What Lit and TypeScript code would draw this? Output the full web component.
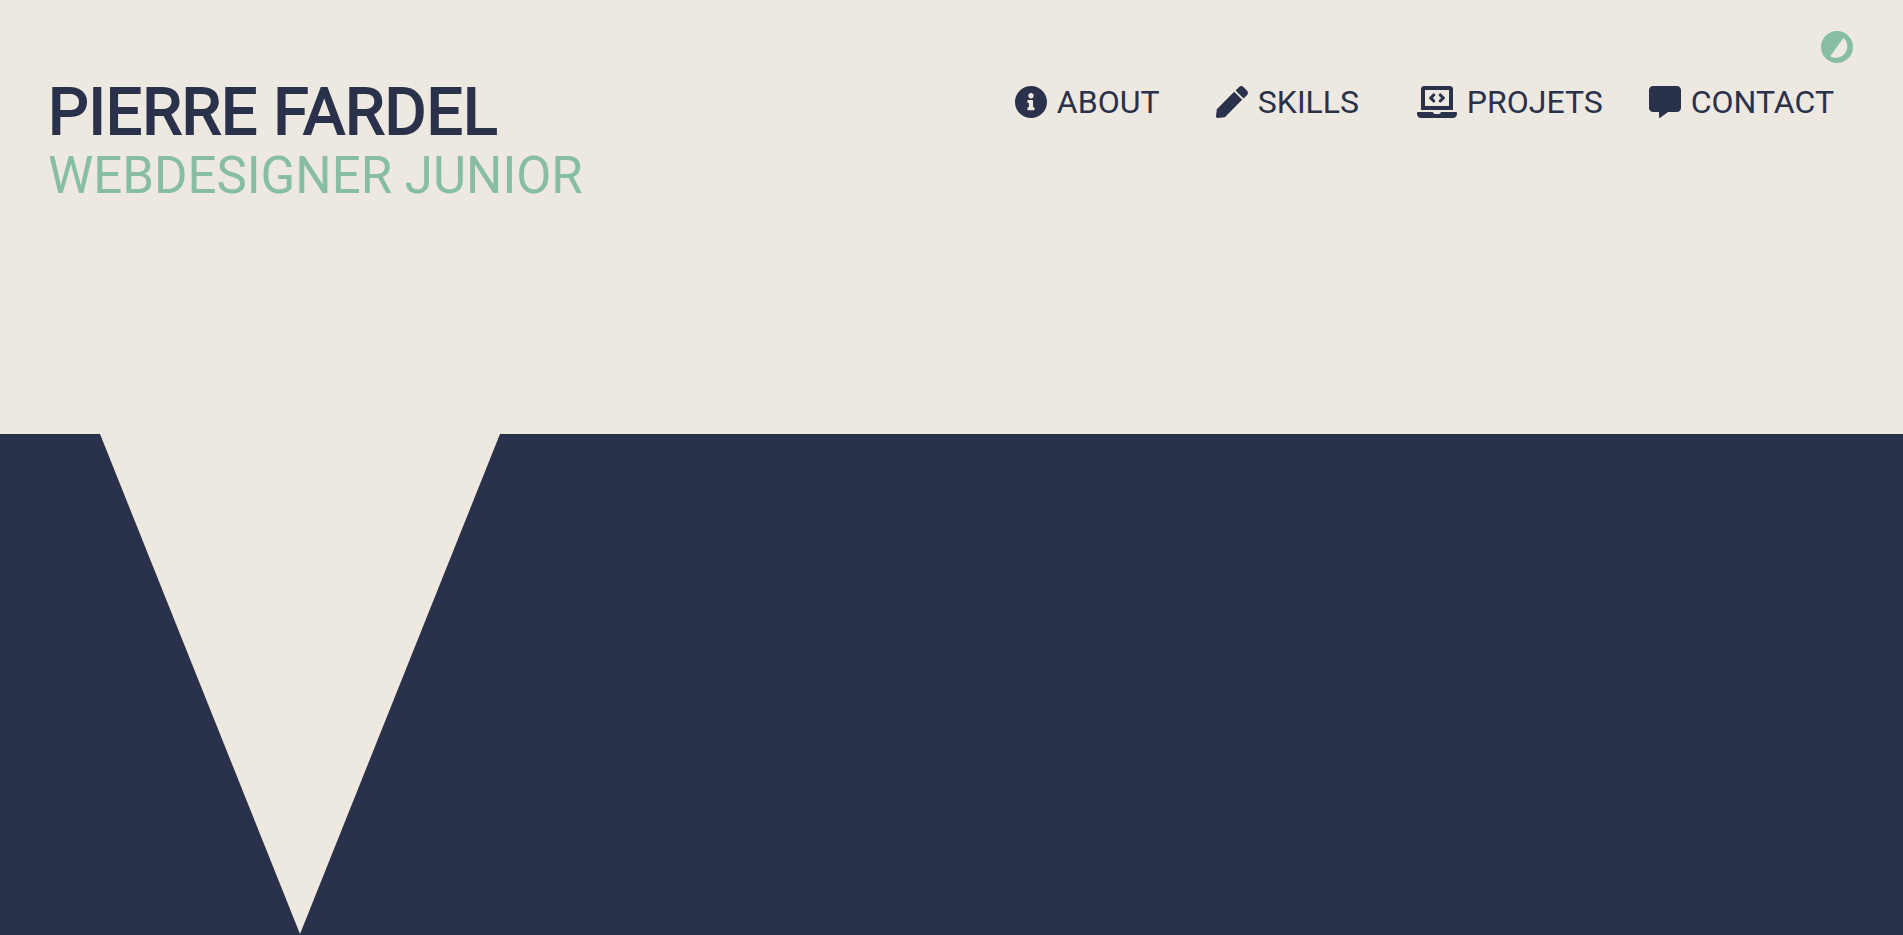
import { LitElement, html, css, svg } from "lit";
import { customElement } from "lit/decorators.js";

const icons = {
  about: svg`<svg class="icon" viewBox="8 8 496 496" width="32" height="32" aria-hidden="true"><path d="M256 8C119.043 8 8 119.083 8 256c0 136.997 111.043 248 248 248s248-111.003 248-248C504 119.083 392.957 8 256 8zm0 110c23.196 0 42 18.804 42 42s-18.804 42-42 42-42-18.804-42-42 18.804-42 42-42zm56 254c0 6.627-5.373 12-12 12h-88c-6.627 0-12-5.373-12-12v-24c0-6.627 5.373-12 12-12h12v-64h-12c-6.627 0-12-5.373-12-12v-24c0-6.627 5.373-12 12-12h64c6.627 0 12 5.373 12 12v100h12c6.627 0 12 5.373 12 12v24z"/></svg>`,
  skills: svg`<svg class="icon" viewBox="0 0 512 512" width="32" height="32" aria-hidden="true"><path d="M290.74 93.24l128.02 128.02-277.99 277.99-114.14 12.6C11.35 513.54-1.56 500.62.14 485.34l12.7-114.22 277.9-277.88zm207.2-19.06l-60.11-60.11c-18.75-18.75-49.16-18.75-67.91 0l-56.55 56.55 128.02 128.02 56.55-56.55c18.75-18.76 18.75-49.16 0-67.91z"/></svg>`,
  projects: svg`<svg class="icon" viewBox="0 0 640 512" width="40" height="32" aria-hidden="true"><path d="M255.03 261.65c6.25 6.25 16.38 6.25 22.63 0l11.31-11.31c6.25-6.25 6.25-16.38 0-22.63L253.25 192l35.71-35.72c6.25-6.25 6.25-16.38 0-22.63l-11.31-11.31c-6.25-6.25-16.38-6.25-22.63 0l-58.34 58.34c-6.25 6.25-6.25 16.38 0 22.63l58.35 58.34zm96.01-11.3l11.31 11.31c6.25 6.25 16.38 6.25 22.63 0l58.34-58.34c6.25-6.25 6.25-16.38 0-22.63l-58.34-58.34c-6.25-6.25-16.38-6.25-22.63 0l-11.31 11.31c-6.25 6.25-6.25 16.38 0 22.63L386.75 192l-35.71 35.72c-6.25 6.25-6.25 16.38 0 22.63zM624 416H381.54c-.74 19.81-14.71 32-32.74 32H288c-18.69 0-33.02-17.47-32.77-32H16c-8.8 0-16 7.2-16 16v16c0 35.2 28.8 64 64 64h512c35.2 0 64-28.8 64-64v-16c0-8.8-7.2-16-16-16zM576 48c0-26.4-21.6-48-48-48H112C85.6 0 64 21.6 64 48v336h512V48zm-64 272H128V64h384v256z"/></svg>`,
  contact: svg`<svg class="icon" viewBox="0 0 512 512" width="32" height="32" aria-hidden="true"><path d="M448 0H64C28.700 0 0 28.700 0 64v288c0 35.300 28.700 64 64 64h96v84c0 9.800 11.200 15.500 19.100 9.700L304 416h144c35.300 0 64-28.700 64-64V64c0-35.300-28.700-64-64-64z"/></svg>`,
};

const links = [
  { href: "#about", label: "ABOUT", icon: icons.about },
  { href: "#skills", label: "SKILLS", icon: icons.skills },
  { href: "#projets", label: "PROJETS", icon: icons.projects },
  { href: "#contact", label: "CONTACT", icon: icons.contact },
];

@customElement("app-root")
export class AppRoot extends LitElement {
  static styles = css`
    :host {
      display: flex;
      flex-direction: column;
      min-height: 100vh;
      background: #ede8e0;
      color: #2a314b;
      font-family: Roboto, sans-serif;
    }
    .header {
      display: flex;
      justify-content: space-between;
      align-items: flex-start;
      box-sizing: border-box;
      min-height: 434px;
      padding: 31px 50px 0 48px;
    }
    .brand {
      padding-top: 42px;
    }
    .name,
    .role {
      margin: 0;
      white-space: nowrap;
    }
    .name {
      font-size: 64px;
      line-height: 80px;
      font-weight: 400;
      -webkit-text-stroke: 2px currentColor;
    }
    .role {
      font-size: 51px;
      line-height: 46px;
      font-weight: 400;
      color: #87bda1;
    }
    .side {
      display: flex;
      flex-direction: column;
      align-items: flex-end;
    }
    .theme {
      display: block;
      padding: 0;
      border: 0;
      background: none;
      color: #87bda1;
      cursor: pointer;
    }
    .icon {
      display: block;
      fill: currentColor;
      flex: none;
    }
    .nav {
      display: flex;
      gap: 46px;
      padding: 20px 19px 0 0;
    }
    .link {
      display: flex;
      align-items: center;
      gap: 10px;
      min-width: 155px;
      color: inherit;
      text-decoration: none;
      font-size: 32px;
      line-height: 38px;
      font-weight: 400;
    }
    .hero {
      flex: 1;
      background: #2a314b;
      padding-left: 100px;
    }
    .wedge {
      width: 400px;
      height: 500px;
      background: #ede8e0;
      clip-path: polygon(0 0, 100% 0, 50% 100%);
    }
  `;

  render() {
    return html`
      <header class="header">
        <div class="brand">
          <h1 class="name">PIERRE FARDEL</h1>
          <h2 class="role">WEBDESIGNER JUNIOR</h2>
        </div>
        <div class="side">
          <button class="theme" type="button" aria-label="Theme">
            <svg class="icon" viewBox="0 0 32 32" width="32" height="32" aria-hidden="true">
              <path fill-rule="evenodd" d="M16 0a16 16 0 1 1 0 32a16 16 0 1 1 0-32zM22.500 6.800L9.200 25.200A11.400 11.400 0 0 0 22.500 6.800z" />
            </svg>
          </button>
          <nav class="nav">
            ${links.map(
              (l) => html`<a class="link" href=${l.href}>${l.icon}<span>${l.label}</span></a>`
            )}
          </nav>
        </div>
      </header>
      <main class="hero"><div class="wedge"></div></main>
    `;
  }
}
